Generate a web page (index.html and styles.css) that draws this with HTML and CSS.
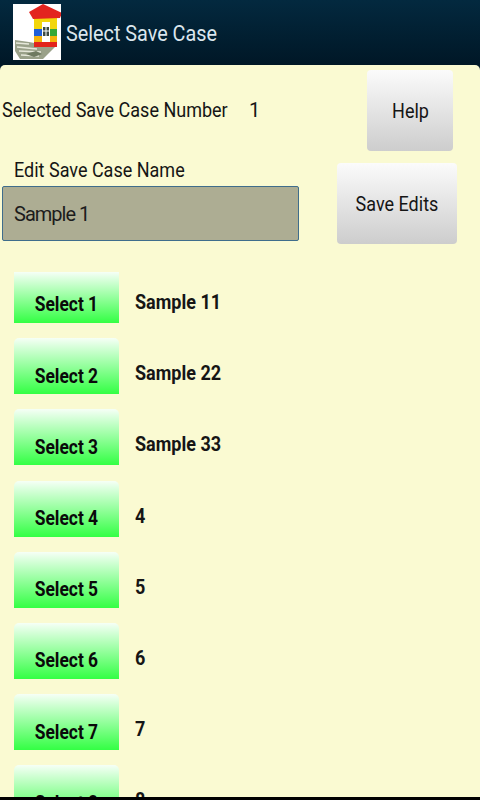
FILE: index.html
```html
<!DOCTYPE html>
<html lang="en">
<head>
  <meta charset="UTF-8">
  <meta name="viewport" content="width=device-width, initial-scale=1.0">
  <title>Select Save Case</title>
  <link rel="stylesheet" href="styles.css">
</head>
<body>
  <div class="screen">
    <header class="title-bar">
      <div class="app-icon">
        <svg width="48" height="56" viewBox="13 4 48 56">
          <rect x="13" y="4" width="48" height="56" fill="#fff"/>
          <path d="M15 40l14 2 26 5-12 12H20l-5-8z" fill="#9aa189"/>
          <path d="M16 43l13 1M17 47l20 2M19 51l22 1M21 55l18 1" stroke="#e6e8da" stroke-width="1.500" fill="none"/>
          <path d="M26 54l10-3 6 3-8 3z" fill="#6f7a60"/>
          <rect x="34" y="17" width="23" height="30" fill="#f2d60c"/>
          <rect x="34" y="29" width="8" height="7" fill="#1f5fd8"/>
          <rect x="50" y="29" width="7" height="7" fill="#35a838"/>
          <rect x="34" y="36" width="23" height="6" fill="#f4b40c"/>
          <rect x="34" y="42" width="23" height="5" fill="#e2231c"/>
          <rect x="42" y="22" width="8" height="20" fill="#fff"/>
          <rect x="43" y="27" width="6" height="9" fill="#3c4a44"/>
          <path d="M46 27v9M43 31h6" stroke="#fff" stroke-width="1"/>
          <path d="M29 12L43 4l19 9-2 5-27 1z" fill="#e3241f"/>
        </svg>
      </div>
      <span class="title-text narrow">Select Save Case</span>
    </header>

    <main class="content">
      <div class="top-form">
        <div class="form-left">
          <div class="selected-row">
            <span class="selected-label"><span class="narrow">Selected Save Case Number</span></span>
            <span>1</span>
          </div>
          <label class="edit-label" for="case-name"><span class="narrow">Edit Save Case Name</span></label>
          <input class="name-input" id="case-name" type="text" value="Sample 1">
        </div>
        <div class="form-right">
          <button class="grey-button help-button"><span class="narrow center">Help</span></button>
          <button class="grey-button save-button"><span class="narrow center">Save Edits</span></button>
        </div>
      </div>

      <div class="case-list">
        <div class="case-row">
          <button class="select-button first"><span class="narrow center">Select 1</span></button>
          <span class="case-name narrow">Sample 11</span>
        </div>
        <div class="case-row">
          <button class="select-button"><span class="narrow center">Select 2</span></button>
          <span class="case-name narrow">Sample 22</span>
        </div>
        <div class="case-row">
          <button class="select-button"><span class="narrow center">Select 3</span></button>
          <span class="case-name narrow">Sample 33</span>
        </div>
        <div class="case-row">
          <button class="select-button"><span class="narrow center">Select 4</span></button>
          <span class="case-name narrow">4</span>
        </div>
        <div class="case-row">
          <button class="select-button"><span class="narrow center">Select 5</span></button>
          <span class="case-name narrow">5</span>
        </div>
        <div class="case-row">
          <button class="select-button"><span class="narrow center">Select 6</span></button>
          <span class="case-name narrow">6</span>
        </div>
        <div class="case-row">
          <button class="select-button"><span class="narrow center">Select 7</span></button>
          <span class="case-name narrow">7</span>
        </div>
        <div class="case-row">
          <button class="select-button"><span class="narrow center">Select 8</span></button>
          <span class="case-name narrow">8</span>
        </div>
      </div>
    </main>
    <div class="bottom-edge"></div>
  </div>
</body>
</html>
```

FILE: styles.css
```css
html, body {
  margin: 0;
  height: 100%;
}

body {
  font-family: Roboto, "Noto Sans", sans-serif;
  background-color: #00192a;
  overflow: hidden;
}

/* the original font is narrower than Roboto */
.narrow {
  display: inline-block;
  transform: scaleX(0.9);
  transform-origin: left center;
}

.narrow.center {
  transform-origin: center;
}

.screen {
  display: flex;
  flex-direction: column;
  height: 800px;
  overflow: hidden;
}

.title-bar {
  flex: none;
  height: 65px;
  box-sizing: border-box;
  padding: 4px 0 0 13px;
  display: flex;
  gap: 5px;
  background: linear-gradient(#03293f, #001726);
}

.app-icon {
  width: 48px;
  height: 56px;
}

.title-text {
  font-size: 22px;
  line-height: 60px;
  color: #dbe6ee;
}

.content {
  flex: 1;
  min-height: 0;
  overflow: hidden;
  background-color: #fafad2;
  border-radius: 5px 5px 0 0;
  color: #151515;
}

.top-form {
  display: flex;
  height: 202px;
  box-sizing: border-box;
  padding: 5px 23px 0 2px;
}

.form-left {
  width: 297px;
  display: flex;
  flex-direction: column;
}

.selected-row {
  display: flex;
  padding-top: 28px;
  font-size: 20px;
  line-height: 24px;
}

.selected-label {
  flex: none;
  width: 247px;
  white-space: nowrap;
}

.edit-label {
  margin: 36px 0 0 12px;
  font-size: 20px;
  line-height: 24px;
}

.name-input {
  margin-top: 4px;
  width: 297px;
  height: 55px;
  flex: none;
  box-sizing: border-box;
  padding: 0 11px;
  border: 1px solid #3f6d8c;
  border-radius: 2px;
  background-color: #adad93;
  font-family: inherit;
  font-size: 20px;
  letter-spacing: -1px;
  color: #1c1c1c;
}

.form-right {
  flex: 1;
  display: flex;
  flex-direction: column;
  align-items: flex-end;
}

.grey-button {
  border: none;
  border-radius: 4px;
  padding: 0;
  background: linear-gradient(#fbfbfb, #cdcdcd);
  font-family: inherit;
  font-size: 20px;
  color: #151515;
}

.help-button {
  width: 86px;
  height: 81px;
  margin-right: 4px;
}

.save-button {
  width: 120px;
  height: 81px;
  margin-top: 12px;
}

.case-list {
  display: flex;
  flex-direction: column;
  gap: 15.2px;
  padding: 0 0 0 14px;
}

.case-row {
  display: flex;
  align-items: center;
  gap: 16px;
  height: 56px;
}

.select-button {
  width: 105px;
  height: 56px;
  flex: none;
  border: none;
  border-radius: 5px 5px 0 0;
  padding: 19px 0 0;
  background: linear-gradient(#f6fff6, #33ff44);
  font-family: inherit;
  font-size: 20px;
  font-weight: 700;
  color: #0a0a0a;
}

.select-button .narrow {
  transform: scaleX(0.87);
}

.select-button.first {
  align-self: flex-end;
  height: 51px;
  padding-top: 13px;
  border-radius: 0;
}

.case-name {
  font-size: 20px;
  font-weight: 700;
  position: relative;
  top: 7px;
}

.bottom-edge {
  flex: none;
  height: 3px;
  background-color: #000;
}
```
